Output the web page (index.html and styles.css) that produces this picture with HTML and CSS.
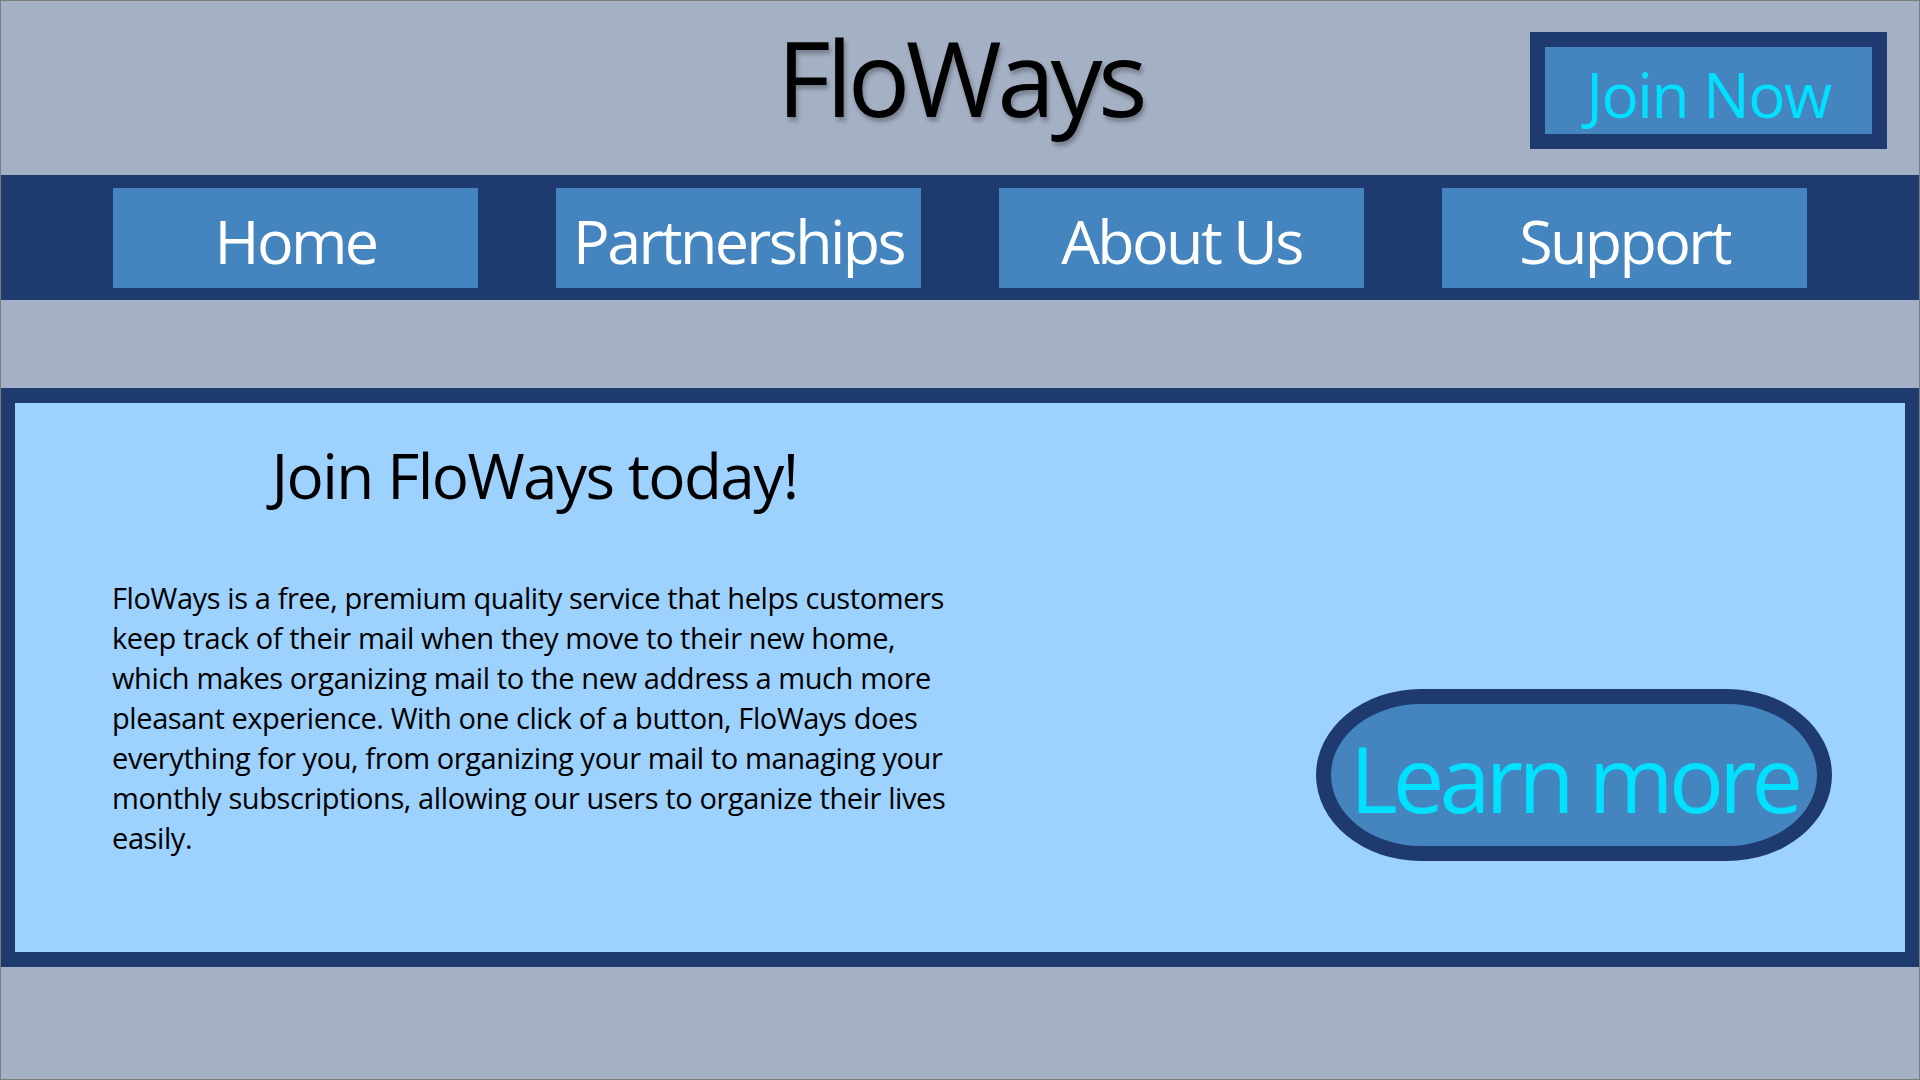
FILE: index.html
```html
<!DOCTYPE html>
<html lang="en">
<head>
<meta charset="utf-8">
<title>FloWays</title>
<link rel="stylesheet" href="styles.css">
</head>
<body>
<div class="page">
  <header class="top">
    <div class="spacer"></div>
    <h1 class="brand">FloWays</h1>
    <a class="join" href="#">Join Now</a>
  </header>
  <nav class="nav">
    <a class="nav-item" href="#">Home</a>
    <a class="nav-item" href="#">Partnerships</a>
    <a class="nav-item" href="#">About Us</a>
    <a class="nav-item" href="#">Support</a>
  </nav>
  <section class="hero">
    <div class="hero-text">
      <h2 class="hero-title">Join FloWays today!</h2>
      <p class="hero-copy">FloWays is a free, premium quality service that helps customers<br>keep track of their mail when they move to their new home,<br>which makes organizing mail to the new address a much more<br>pleasant experience. With one click of a button, FloWays does<br>everything for you, from organizing your mail to managing your<br>monthly subscriptions, allowing our users to organize their lives<br>easily.</p>
    </div>
    <a class="learn" href="#">Learn more</a>
  </section>
</div>
</body>
</html>
```
FILE: styles.css
```css
* { box-sizing: border-box; }
html, body { margin: 0; padding: 0; }
body {
  font-family: "Open Sans", "Noto Sans", sans-serif;
  background: #a4b0c4;
}
a { text-decoration: none; }
.page {
  width: 1920px;
  height: 1080px;
  border: 1px solid #7c7c7c;
  background: #a4b0c4;
  overflow: hidden;
}
.top {
  height: 174px;
  display: grid;
  grid-template-columns: 1fr auto 1fr;
  align-items: start;
}
.brand {
  margin: 24px 0 0;
  font-size: 104px;
  line-height: 104px;
  font-weight: 400;
  color: #000;
  text-shadow: 2px 4px 4px rgba(0, 0, 0, 0.28);
  letter-spacing: -4.6px;
}
.join {
  justify-self: end;
  margin: 31px 32px 0 0;
  width: 357px;
  height: 117px;
  border: 15px solid #1e3a6e;
  background: #4585bf;
  color: #00e0ff;
  font-size: 62px;
  letter-spacing: -1.4px;
  white-space: nowrap;
  display: flex;
  align-items: center;
  justify-content: center;
  padding-top: 6px;
}
.nav {
  height: 125px;
  background: #1e3a6e;
  display: flex;
  justify-content: center;
  gap: 78px;
  padding: 13px 0 12px;
}
.nav-item {
  width: 365px;
  height: 100px;
  background: #4585bf;
  color: #fff;
  font-size: 61px;
  letter-spacing: -2.6px;
  white-space: nowrap;
  display: flex;
  align-items: center;
  justify-content: center;
  padding-top: 4px;
}
.hero {
  margin-top: 88px;
  height: 579px;
  border-style: solid;
  border-color: #1e3a6e;
  border-width: 15px 14px;
  background: #9dd1fe;
  display: flex;
  justify-content: space-between;
  align-items: flex-start;
}
.hero-text {
  width: 845px;
  margin-left: 97px;
  padding-top: 30px;
}
.hero-title {
  margin: 0;
  text-align: center;
  font-size: 62px;
  font-weight: 400;
  color: #000;
  letter-spacing: -1.6px;
  white-space: nowrap;
}
.hero-copy {
  margin: 61px 0 0;
  font-size: 29px;
  line-height: 40px;
  color: #000;
  letter-spacing: -0.4px;
  white-space: nowrap;
}
.learn {
  margin: 286px 73px 0 0;
  width: 516px;
  height: 172px;
  border: 15px solid #1e3a6e;
  border-radius: 105px / 86px;
  background: #4585bf;
  color: #00e0ff;
  font-size: 92px;
  letter-spacing: -5px;
  white-space: nowrap;
  display: flex;
  align-items: center;
  justify-content: center;
  padding-top: 4px;
}
```
